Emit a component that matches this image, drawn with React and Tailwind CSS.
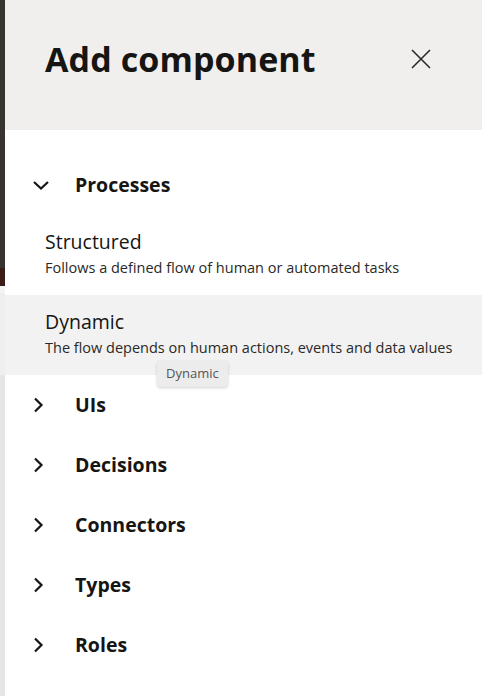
import React from "react";

const font = { fontFamily: '"Open Sans", "Noto Sans", sans-serif' };

// chevron icons drawn to match the thin Redwood style
const ChevronDown = () => (
  <svg width="18" height="12" viewBox="0 0 18 12" fill="none">
    <path d="M2 3 L9 9.5 L16 3" stroke="#161513" strokeWidth="2.2" />
  </svg>
);

const ChevronRight = () => (
  <svg width="12" height="16" viewBox="0 0 12 16" fill="none">
    <path d="M3 1.5 L9.5 8 L3 14.5" stroke="#161513" strokeWidth="2.2" />
  </svg>
);

const CloseIcon = () => (
  <svg width="22" height="22" viewBox="0 0 22 22" fill="none">
    <path d="M2 2 L20 20 M20 2 L2 20" stroke="#2b2a28" strokeWidth="1.6" />
  </svg>
);

const sections = ["UIs", "Decisions", "Connectors", "Types", "Roles"];

const SectionRow = ({ label, open }) => (
  <div className="h-[60px] flex items-center">
    <div className="w-[70px] flex justify-start pl-[27px]">
      {open ? <ChevronDown /> : <ChevronRight />}
    </div>
    <span className="text-[19.5px] font-bold text-[#161513]">{label}</span>
  </div>
);

const Item = ({ title, desc, active, children }) => (
  <div className={`relative h-[80px] flex flex-col justify-center pl-[40px] ${active ? "bg-[#f2f2f2]" : ""}`}>
    <p className="text-[19.5px] leading-[22px] mb-[4px] text-[#161513]">{title}</p>
    <p className="text-[14.5px] leading-[22px] text-[#2a2927]">{desc}</p>
    {children}
  </div>
);

export default function App() {
  return (
    <div className="w-[482px] h-[696px] flex overflow-hidden bg-white" style={font}>
      {/* background page peeking out at the left */}
      <div className="w-[5px] flex flex-col shrink-0">
        <div className="h-[268px] bg-[#37332f]"></div>
        <div className="h-[18px] bg-[#3b1c19]"></div>
        <div className="h-[7px] bg-[#f4f4f4]"></div>
        <div className="h-[82px] bg-[#efefef]"></div>
        <div className="flex-1 bg-[#e6e5e3]"></div>
      </div>

      {/* drawer */}
      <div className="flex-1 flex flex-col">
        <div className="h-[130px] bg-[#f1efed] flex items-center justify-between pl-[40px] pr-[50px] pb-[12px]">
          <h1 className="text-[34px] font-bold text-[#161513] tracking-[0.1px]">Add component</h1>
          <CloseIcon />
        </div>

        <div className="pt-[25px]">
          <SectionRow label="Processes" open />
          <Item title="Structured" desc="Follows a defined flow of human or automated tasks" />
          <Item title="Dynamic" desc="The flow depends on human actions, events and data values" active>
            <div className="absolute left-[152px] top-[66px] px-[9px] py-[3px] rounded-[4px] bg-[#ececec] shadow-[0_1px_3px_rgba(0,0,0,0.18)] text-[13px] text-[#555] z-10">
              Dynamic
            </div>
          </Item>
          {sections.map((s) => (
            <SectionRow key={s} label={s} />
          ))}
        </div>
      </div>
    </div>
  );
}
